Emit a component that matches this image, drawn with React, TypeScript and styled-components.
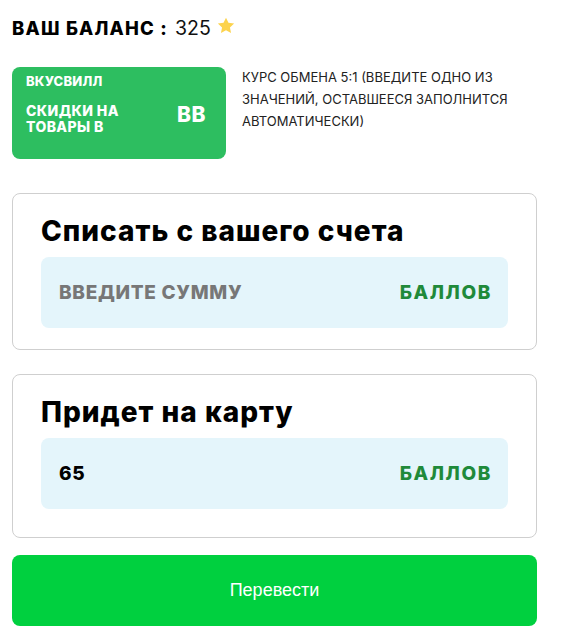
import * as React from 'react';
import styled, { createGlobalStyle } from 'styled-components';

const GlobalStyle = createGlobalStyle`
    body {
        margin: 0;
        background: #fff;
        font-family: Inter, "Noto Sans", sans-serif;
        color: #000;
    }
`;

const Page = styled.div`
    width: 525px;
    padding: 15px 12px 12px;
    display: flex;
    flex-direction: column;
`;

const Balance = styled.div`
    display: flex;
    align-items: center;
    font-size: 18.5px;
    height: 26px;

    b {
        font-weight: 800;
        letter-spacing: 1.2px;
        margin-right: 7px;
    }
`;

const BalanceValue = styled.span`
    font-weight: 400;
    font-size: 19.5px;
    color: #111;
`;

const Star = styled.svg`
    width: 20px;
    height: 20px;
    margin-left: 5px;
    margin-top: -4px;
`;

const InfoRow = styled.div`
    display: flex;
    gap: 16px;
    margin-top: 26px;
`;

const PromoCard = styled.div`
    width: 214px;
    height: 92px;
    box-sizing: border-box;
    background: #2dbe60;
    border-radius: 8px;
    padding: 6px 14px 0 14px;
    color: #fff;
    font-weight: 800;
    display: flex;
    flex-direction: column;
`;

const Brand = styled.div`
    font-size: 13px;
    line-height: 16px;
    letter-spacing: 0.2px;
`;

const PromoBody = styled.div`
    display: flex;
    justify-content: space-between;
    align-items: center;
    margin-top: 14px;
`;

const PromoText = styled.div`
    font-size: 14px;
    line-height: 16px;
    letter-spacing: 0.4px;
`;

const PromoMark = styled.div`
    font-size: 21px;
    letter-spacing: 0.5px;
    margin-right: 6px;
    margin-top: -10px;
`;

const Rate = styled.div`
    font-size: 13px;
    line-height: 22px;
    color: #222;
    margin-top: -1px;
    width: 290px;
`;

const Card = styled.section<{ $gap?: number; $bottom?: number }>`
    margin-top: ${p => p.$gap ?? 24}px;
    border: 1px solid #cfcfcf;
    border-radius: 8px;
    padding: 19px 28px ${p => p.$bottom ?? 21}px 28px;
    display: flex;
    flex-direction: column;
`;

const CardTitle = styled.h2`
    margin: 0 0 8px;
    font-size: 28px;
    line-height: 36px;
    font-weight: 800;
    letter-spacing: 1px;
    color: #000;
`;

const Field = styled.div`
    height: 71px;
    background: #e4f5fb;
    border-radius: 8px;
    display: flex;
    align-items: center;
    justify-content: space-between;
    padding: 0 16px 0 18px;
    font-size: 19px;
    font-weight: 800;
`;

const FieldValue = styled.span<{ $placeholder?: boolean }>`
    color: ${p => (p.$placeholder ? '#777' : '#000')};
    letter-spacing: 0.7px;
`;

const Unit = styled.span`
    color: #1f8a3a;
    letter-spacing: 1.6px;
`;

const Button = styled.button`
    margin-top: 17px;
    height: 71px;
    border: none;
    border-radius: 8px;
    background: #00d03f;
    color: #fff;
    font-family: "Liberation Sans", Arial, sans-serif;
    font-size: 18px;
`;

export default function App() {
    return (
        <Page>
            <GlobalStyle />
            <Balance>
                <b>ВАШ БАЛАНС :</b>
                <BalanceValue>325</BalanceValue>
                <Star viewBox="0 0 24 24">
                    <path
                        d="M12 2l2.95 6.2 6.8.85-5 4.7 1.3 6.75L12 17.2l-6.05 3.3 1.3-6.75-5-4.7 6.8-.85z"
                        fill="#fcd34d"
                    />
                </Star>
            </Balance>
            <InfoRow>
                <PromoCard>
                    <Brand>ВКУСВИЛЛ</Brand>
                    <PromoBody>
                        <PromoText>
                            СКИДКИ НА<br />
                            ТОВАРЫ В
                        </PromoText>
                        <PromoMark>BB</PromoMark>
                    </PromoBody>
                </PromoCard>
                <Rate>
                    КУРС ОБМЕНА 5:1 (ВВЕДИТЕ ОДНО ИЗ ЗНАЧЕНИЙ, ОСТАВШЕЕСЯ ЗАПОЛНИТСЯ АВТОМАТИЧЕСКИ)
                </Rate>
            </InfoRow>
            <Card $gap={34}>
                <CardTitle>Списать с вашего счета</CardTitle>
                <Field>
                    <FieldValue $placeholder>ВВЕДИТЕ СУММУ</FieldValue>
                    <Unit>БАЛЛОВ</Unit>
                </Field>
            </Card>
            <Card $bottom={28}>
                <CardTitle>Придет на карту</CardTitle>
                <Field>
                    <FieldValue>65</FieldValue>
                    <Unit>БАЛЛОВ</Unit>
                </Field>
            </Card>
            <Button>Перевести</Button>
        </Page>
    );
}
